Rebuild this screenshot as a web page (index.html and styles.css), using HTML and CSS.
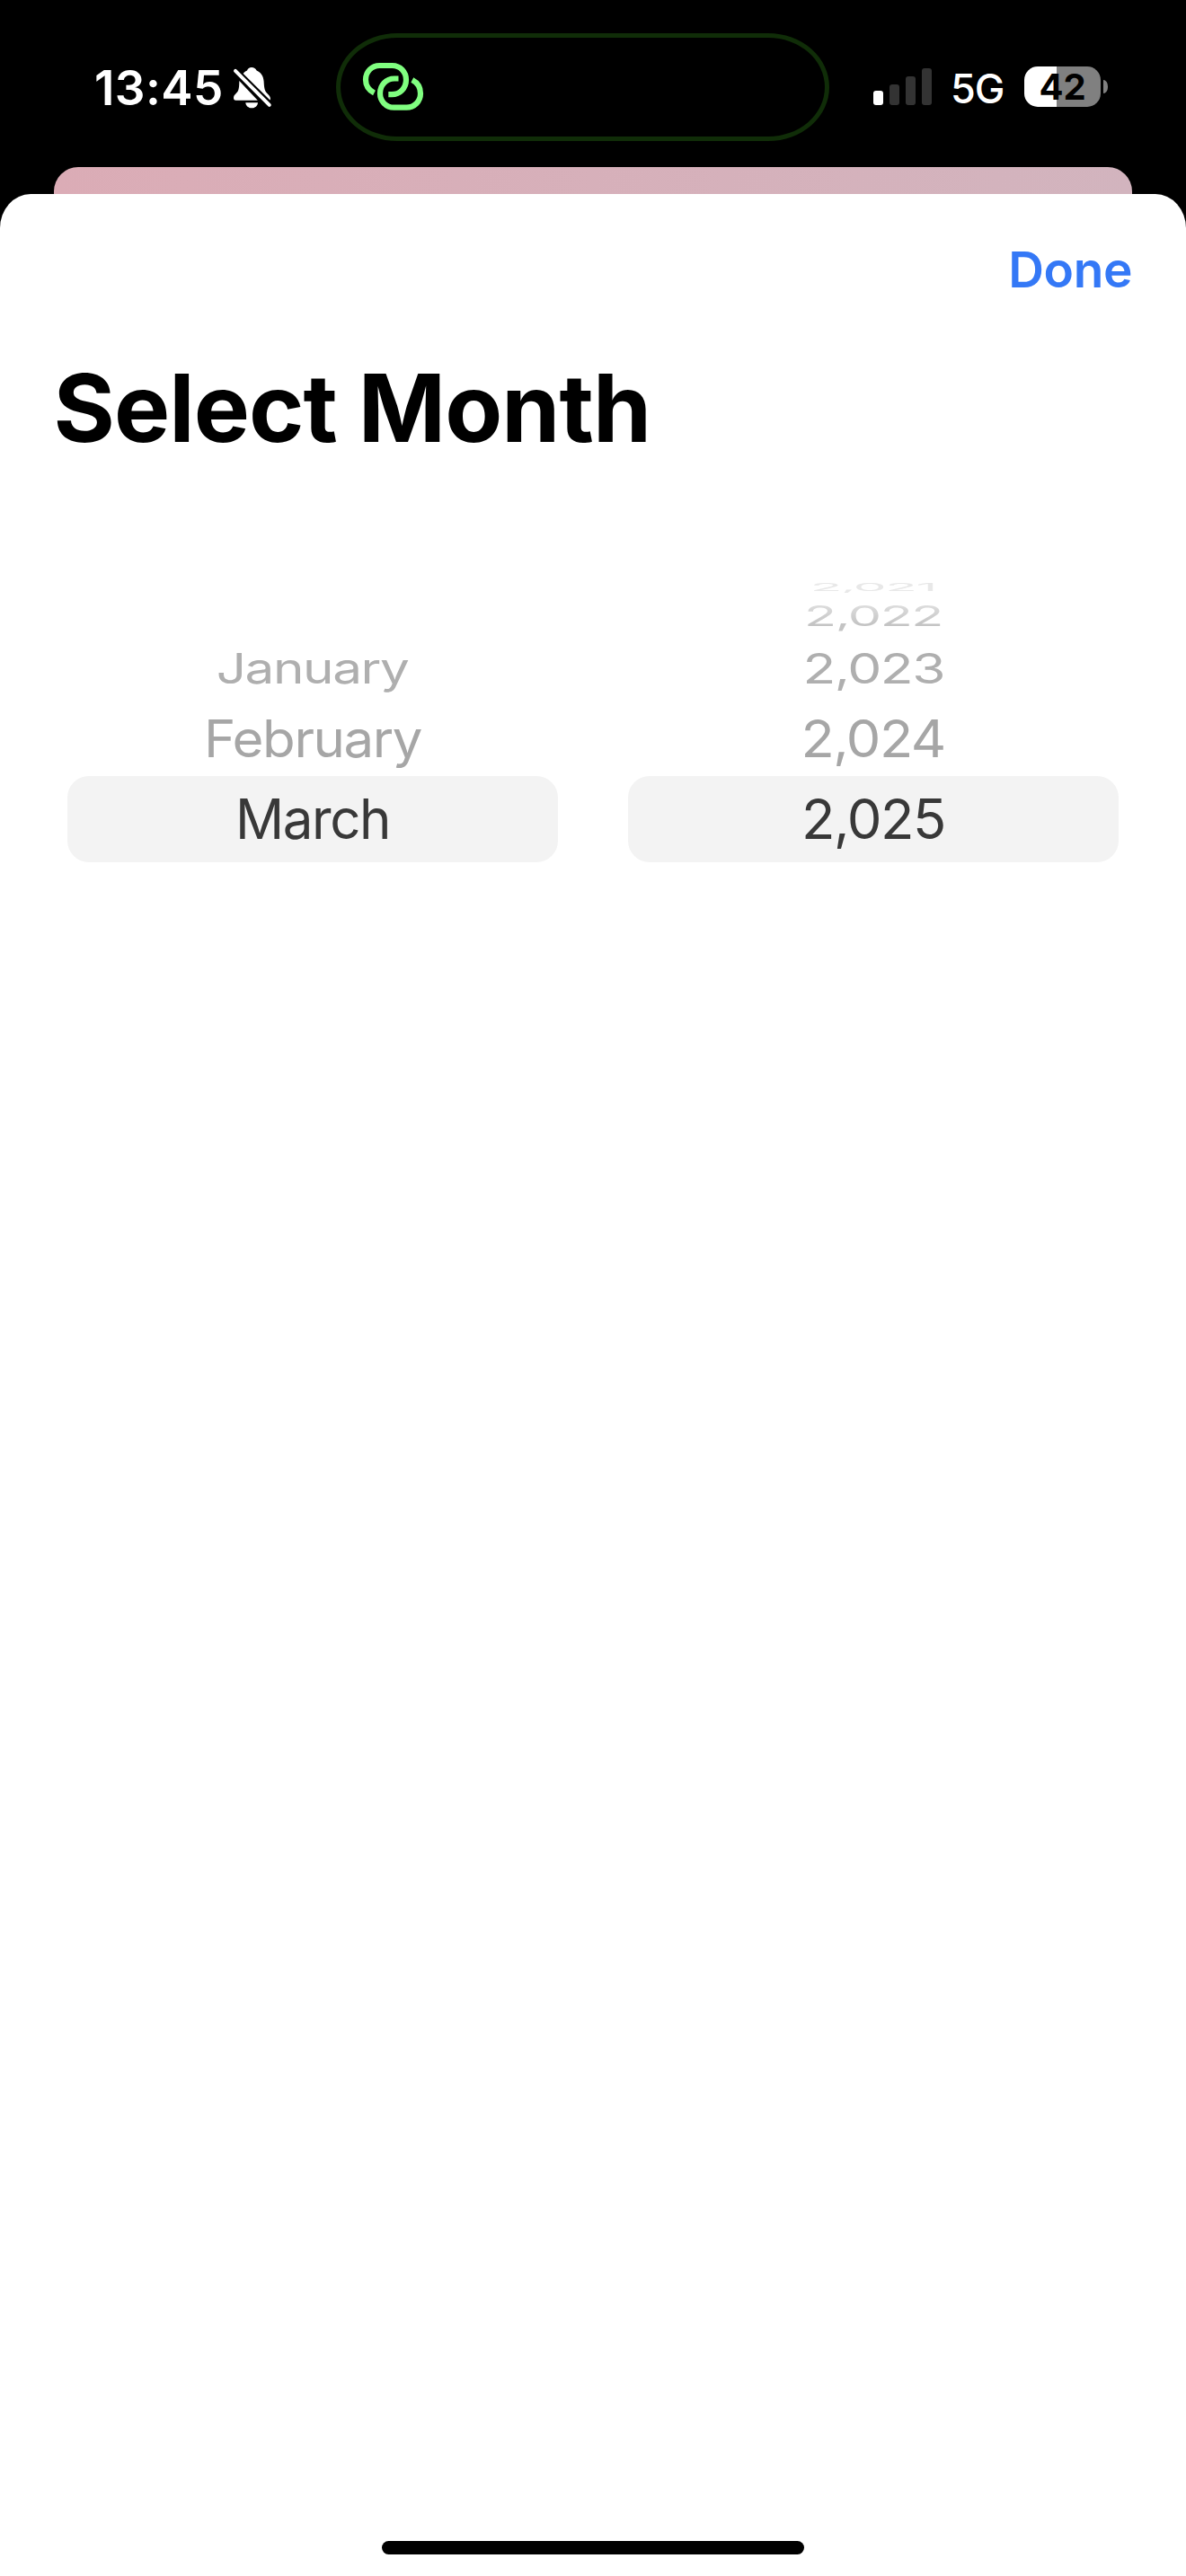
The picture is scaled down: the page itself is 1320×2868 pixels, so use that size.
FILE: index.html
```
<!DOCTYPE html>
<html lang="en">
<head>
<meta charset="utf-8">
<title>Select Month</title>
<link rel="stylesheet" href="styles.css">
</head>
<body>
<div class="screen">
  <header class="status">
    <div class="status-left">
      <span class="time">13:45</span>
      <svg class="bell" width="46" height="48" viewBox="0 0 46 48" aria-hidden="true">
        <path fill="#fff" d="M13.500 9 C15.500 7 17 6 18 5.600 C18.800 3.200 20.600 2 23 2 C25.600 2 27.600 3.200 28.600 5.600 C33.600 8 36.200 12 36.600 17.500 C37 23.500 37.200 27.500 39.500 30 C41.500 32.300 44 34 44 37 L43.500 38.500 Z"/>
        <path fill="#fff" d="M9.300 17 L29.800 38.700 H5.500 C3.700 38.700 3 37.500 3 36 C3 32.600 5.800 31.500 7.600 28.700 C9.200 26.200 9.300 21 9.300 17 Z"/>
        <path fill="#fff" d="M16.300 41.200 H30 C29.800 44.800 26.800 47.300 23.200 47.300 C19.600 47.300 16.500 44.800 16.300 41.200 Z"/>
        <path d="M4.500 5.500 L43 44.300" stroke="#000" stroke-width="8"/>
        <path d="M5 5.800 L42.800 43.800" stroke="#fff" stroke-width="4" stroke-linecap="round"/>
      </svg>
    </div>
    <div class="island">
      <svg width="74" height="60" viewBox="0 0 74 60" fill="none" stroke="#80ff80" stroke-width="6.200" aria-hidden="true">
        <path d="M16.500 39.500 C10.500 36.500 7 31 7 24.800 C7 15.500 14 9 22.500 9 H36.500 C45.500 9 52 16 52 24.800 C52 33.800 45.500 41.200 36 41.200 H32.300"/>
        <path d="M58.800 25 C64.500 28 68 33.500 68 40 C68 49 61 55.700 52.500 55.700 H38.500 C29.500 55.700 23 48.500 23 40 C23 31 29.500 23.500 39 23.500 H43.500"/>
      </svg>
    </div>
    <div class="status-right">
      <div class="signal"><i class="bar b1"></i><i class="bar b2"></i><i class="bar b3"></i><i class="bar b4"></i></div>
      <span class="network">5G</span>
      <div class="battery"><span class="level">42</span><i class="nub"></i></div>
    </div>
  </header>
  <div class="backdrop-card"></div>
  <main class="sheet">
    <nav class="toolbar"><button class="done">Done</button></nav>
    <h1 class="title">Select Month</h1>
    <div class="pickers">
      <div class="wheel months">
        <div class="row r4"></div>
        <div class="row r3"></div>
        <div class="row r2"><span>January</span></div>
        <div class="row r1"><span>February</span></div>
        <div class="row selected"><span>March</span></div>
      </div>
      <div class="wheel years">
        <div class="row r4"><span>2,021</span></div>
        <div class="row r3"><span>2,022</span></div>
        <div class="row r2"><span>2,023</span></div>
        <div class="row r1"><span>2,024</span></div>
        <div class="row selected"><span>2,025</span></div>
      </div>
    </div>
    <div class="home-indicator"></div>
  </main>
</div>
</body>
</html>
```
FILE: styles.css
```
* { box-sizing: border-box; }
body {
  margin: 0;
  background: #000;
  font-family: Inter, "Liberation Sans", sans-serif;
}
.screen {
  width: 1320px;
  height: 2868px;
  display: flex;
  flex-direction: column;
  overflow: hidden;
}

/* Status bar */
.status {
  height: 186px;
  flex: none;
  display: flex;
  align-items: flex-start;
  color: #fff;
}
.status-left {
  width: 374px;
  padding: 66px 0 0 105px;
  display: flex;
}
.time {
  font-size: 53px;
  line-height: 64px;
  font-weight: 600;
  letter-spacing: 0.4px;
}
.bell { margin: 7px 0 0 8px; flex: none; }
.island {
  width: 549px;
  height: 120px;
  margin-top: 37px;
  padding: 22px 0 0 21px;
  border: 5px solid #102d08;
  border-radius: 68px / 60px;
}
.island svg { display: block; }
.status-right {
  display: flex;
  align-items: flex-start;
  padding-left: 49px;
}
.signal {
  display: flex;
  align-items: flex-end;
  gap: 7px;
  height: 41px;
  margin-top: 76px;
}
.bar { width: 11px; border-radius: 3px; background: #333; }
.b1 { height: 16px; background: #fff; }
.b2 { height: 23px; }
.b3 { height: 32px; }
.b4 { height: 41px; }
.network {
  width: 82px;
  margin: 71px 0 0 21px;
  font-size: 45px;
  line-height: 56px;
  font-weight: 500;
  letter-spacing: -1px;
}
.battery { display: flex; align-items: center; gap: 3px; margin-top: 74px; }
.level {
  width: 85px;
  height: 45px;
  border-radius: 15px;
  background: linear-gradient(90deg, #fff 36px, #808080 36px);
  color: #000;
  font-size: 40px;
  line-height: 45px;
  font-weight: 700;
  text-align: center;
}
.nub { width: 5px; height: 15px; border-radius: 0 5px 5px 0 / 0 7px 7px 0; background: #808080; }

/* Card behind the sheet */
.backdrop-card {
  height: 70px;
  flex: none;
  margin: 0 60px -40px;
  border-radius: 27px 27px 0 0;
  background: linear-gradient(90deg, #dbacb6, #d2b4be);
}

/* Sheet */
.sheet {
  flex: 1;
  display: flex;
  flex-direction: column;
  background: #fff;
  border-radius: 34px 34px 0 0 / 38px 38px 0 0;
}
.toolbar {
  display: flex;
  justify-content: flex-end;
  padding: 51px 60px 0;
}
.done {
  padding: 0;
  border: 0;
  background: none;
  font: 600 55px/66px Inter, "Liberation Sans", sans-serif;
  letter-spacing: -0.4px;
  color: #3478f6;
}
.title {
  margin: 57px 0 0 59.5px;
  font-size: 104.5px;
  line-height: 128px;
  font-weight: 700;
  letter-spacing: -0.93px;
  color: #000;
}

/* Wheel pickers */
.pickers {
  display: flex;
  gap: 78px;
  margin: 126px 75px 0;
}
.wheel { flex: 1; font-size: 61.5px; line-height: 74px; letter-spacing: -1.5px; }
.row { display: flex; align-items: center; justify-content: center; }
.row span { flex: none; }
.r4 { height: 19px; color: #e8e8e8; }
.r3 { height: 45px; color: #c4c4c4; }
.r2 { height: 72px; color: #afafaf; }
.r1 { height: 84px; color: #a6a6a6; }
.selected { height: 96px; border-radius: 24px; background: #f3f3f3; color: #383838; }
.r4 span { transform: scale(0.95, 0.2); }
.r3 span {
  transform: scale(0.963, 0.503);
  -webkit-mask-image: linear-gradient(rgba(0, 0, 0, 0.6) 20%, #000 75%);
  mask-image: linear-gradient(rgba(0, 0, 0, 0.6) 20%, #000 75%);
}
.r2 span { transform: scale(0.982, 0.765); }
.r1 span { transform: scale(0.995, 0.933); }
.months .r2 span { transform: scale(0.95, 0.765); }
.months .r1 span { transform: scale(0.976, 0.933); }
.months .selected span { transform: scaleX(0.976); }

.home-indicator {
  width: 470px;
  height: 15px;
  margin: auto auto 24px;
  border-radius: 8px;
  background: #000;
}
```
